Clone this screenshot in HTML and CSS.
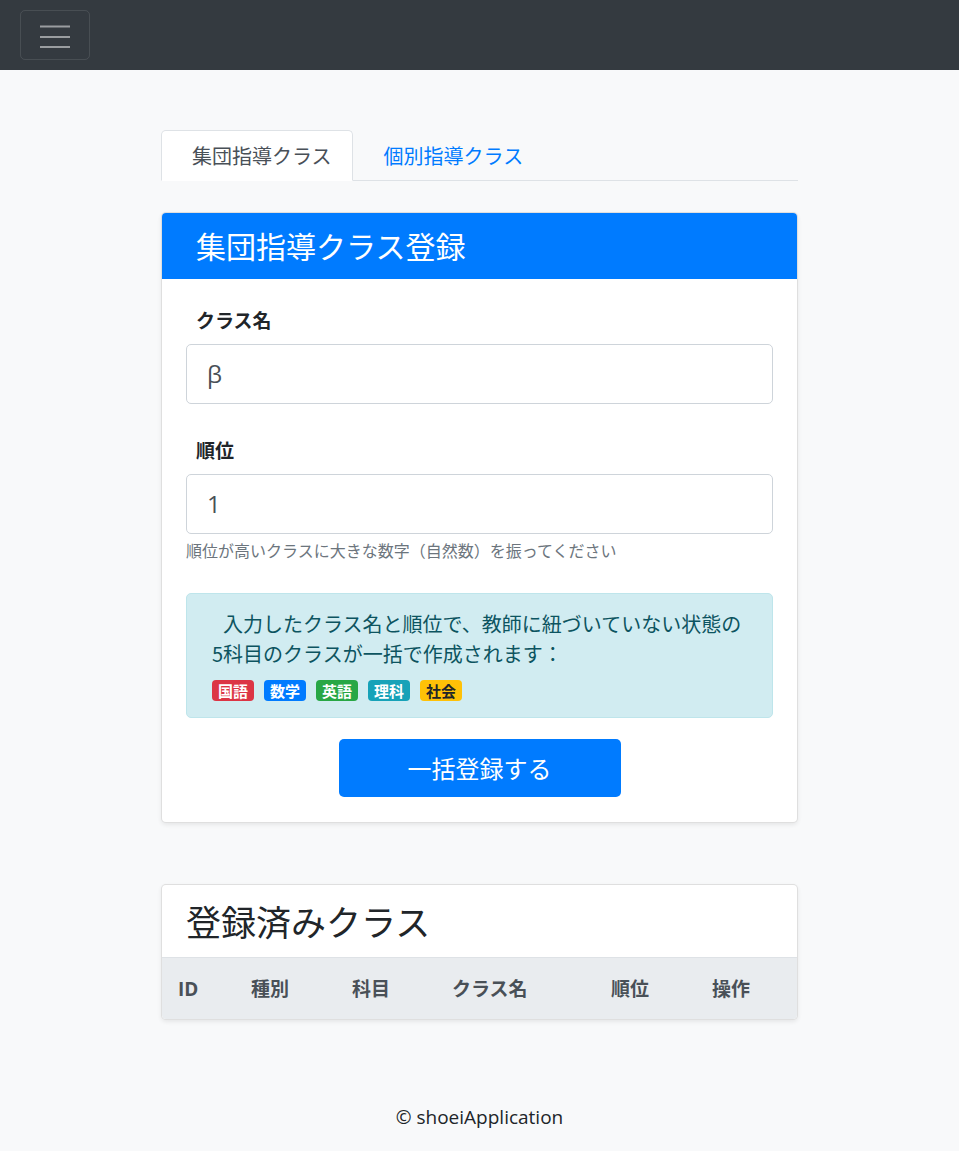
FILE: index.html
```html
<!DOCTYPE html>
<html lang="ja">
<head>
<meta charset="utf-8">
<title>クラス登録</title>
<link rel="stylesheet" href="styles.css">
</head>
<body>
<header class="navbar">
  <button class="toggler" type="button" aria-label="menu">
    <svg class="toggler-icon" width="30" height="30" viewBox="0 0 30 30">
      <path d="M0 6.5h30M0 17h30M0 27h30" stroke="rgba(255,255,255,0.5)" stroke-width="2.2" stroke-linecap="butt" fill="none"/>
    </svg>
  </button>
</header>

<main class="container">
  <ul class="tabs">
    <li class="tab active">集団指導クラス</li>
    <li class="tab">個別指導クラス</li>
  </ul>

  <section class="card card-form">
    <div class="card-header primary">集団指導クラス登録</div>
    <div class="card-body">
      <div class="form-group">
        <label class="label">クラス名</label>
        <div class="input">β</div>
      </div>
      <div class="form-group">
        <label class="label">順位</label>
        <div class="input">1</div>
        <div class="hint">順位が高いクラスに大きな数字（自然数）を振ってください</div>
      </div>
      <div class="alert">
        <p class="alert-text"><span class="indent"></span>入力したクラス名と順位で、教師に紐づいていない状態の5科目のクラスが一括で作成されます：</p>
        <div class="badges">
          <span class="badge red">国語</span>
          <span class="badge blue">数学</span>
          <span class="badge green">英語</span>
          <span class="badge teal">理科</span>
          <span class="badge yellow">社会</span>
        </div>
      </div>
      <div class="actions">
        <button class="btn" type="button">一括登録する</button>
      </div>
    </div>
  </section>

  <section class="card card-list">
    <div class="card-header plain">登録済みクラス</div>
    <table class="table">
      <thead>
        <tr>
          <th class="c-id">ID</th>
          <th class="c-type">種別</th>
          <th class="c-subj">科目</th>
          <th class="c-name">クラス名</th>
          <th class="c-rank">順位</th>
          <th class="c-op">操作</th>
        </tr>
      </thead>
    </table>
  </section>
</main>

<footer class="footer">© shoeiApplication</footer>
</body>
</html>
```

FILE: styles.css
```css
* { box-sizing: border-box; }

html, body {
  margin: 0;
  padding: 0;
}

body {
  background: #f8f9fa;
  color: #212529;
  font-family: "Open Sans", "Noto Sans CJK JP", sans-serif;
  font-size: 20px;
  line-height: 1.5;
  min-height: 1151px;
}

.navbar {
  height: 70px;
  background: #343a40;
  padding: 10px 20px;
  display: flex;
  align-items: flex-start;
}

.toggler {
  width: 70px;
  height: 50px;
  border: 1px solid rgba(255, 255, 255, 0.1);
  border-radius: 5px;
  background: transparent;
  padding: 0;
  display: flex;
  align-items: center;
  justify-content: center;
}

.toggler-icon { display: block; }

.container {
  width: 637px;
  margin: 0 auto;
  padding-top: 60px;
}

.tabs {
  list-style: none;
  margin: 0 0 31px 0;
  padding: 0;
  display: flex;
  border-bottom: 1px solid #dee2e6;
  height: 51px;
}

.tab {
  font-family: "Noto Sans CJK JP", sans-serif;
  font-size: 20px;
  line-height: 30px;
  padding: 10px 20px 10px 30px;
  border: 1px solid transparent;
  border-top-left-radius: 5px;
  border-top-right-radius: 5px;
  margin-bottom: -1px;
  color: #007bff;
  height: 51px;
}

.tab.active {
  color: #495057;
  background: #fff;
  border-color: #dee2e6 #dee2e6 #fff;
}

.card {
  background: #fff;
  border: 1px solid rgba(0, 0, 0, 0.125);
  border-radius: 5px;
  box-shadow: 0 2px 4px rgba(0, 0, 0, 0.075);
  overflow: hidden;
}

.card-form { margin-bottom: 61px; }

.card-header {
  font-family: "Noto Sans CJK JP", sans-serif;
  font-weight: 400;
}

.card-header.primary {
  background: #007bff;
  color: #fff;
  font-size: 30px;
  line-height: 45px;
  padding: 10px 34px 11px;
}

.card-header.plain {
  font-size: 35px;
  line-height: 45px;
  padding: 13px 24px 14px;
  color: #212529;
  border-bottom: 1px solid #dee2e6;
}

.card-body {
  padding: 26px 24px 25px;
}

.form-group { margin-bottom: 31px; }

.label {
  display: block;
  font-family: "Noto Sans CJK JP", sans-serif;
  font-weight: 700;
  font-size: 19px;
  line-height: 30px;
  padding-left: 10px;
  margin-bottom: 9px;
}

.input {
  height: 60px;
  border: 1px solid #ced4da;
  border-radius: 5px;
  padding: 0 20px;
  font-size: 24px;
  line-height: 58px;
  color: #495057;
  background: #fff;
}

.hint {
  font-family: "Noto Sans CJK JP", sans-serif;
  font-size: 16px;
  line-height: 24px;
  color: #6c757d;
  margin-top: 4px;
}

.alert {
  background: #d1ecf1;
  border: 1px solid #bee5eb;
  border-radius: 5px;
  color: #0c5460;
  padding: 15px 24px 16px 25px;
}

.alert-text {
  margin: 0;
  font-family: "Noto Sans CJK JP", sans-serif;
  font-size: 20px;
  line-height: 30px;
}

.indent {
  display: inline-block;
  width: 11px;
}

.badges {
  display: flex;
  gap: 10px;
  margin-top: 11px;
}

.badge {
  display: inline-block;
  width: 42px;
  height: 21px;
  border-radius: 4px;
  font-family: "Noto Sans CJK JP", sans-serif;
  font-size: 15px;
  font-weight: 700;
  line-height: 21px;
  text-align: center;
  color: #fff;
}

.badge.red { background: #dc3545; }
.badge.blue { background: #007bff; }
.badge.green { background: #28a745; }
.badge.teal { background: #17a2b8; }
.badge.yellow { background: #ffc107; color: #212529; }

.actions {
  display: flex;
  justify-content: center;
  margin-top: 21px;
}

.btn {
  width: 282px;
  height: 58px;
  border: 0;
  border-radius: 5px;
  background: #007bff;
  color: #fff;
  font-family: "Noto Sans CJK JP", sans-serif;
  font-size: 24px;
  line-height: 58px;
  padding: 0;
}

.table {
  width: 100%;
  border-collapse: collapse;
  table-layout: fixed;
}

.table th {
  background: #e9ecef;
  color: #495057;
  font-family: "Open Sans", "Noto Sans CJK JP", sans-serif;
  font-weight: 700;
  font-size: 19px;
  line-height: 30px;
  padding: 16px 0 15px 16px;
  text-align: left;
}

.c-id { width: 73px; }
.c-type { width: 101px; }
.c-subj { width: 100px; }
.c-name { width: 159px; }
.c-rank { width: 101px; }
.c-op { width: auto; }

.footer {
  text-align: center;
  margin-top: 82px;
  font-size: 19px;
  line-height: 30px;
  color: #212529;
}
```
